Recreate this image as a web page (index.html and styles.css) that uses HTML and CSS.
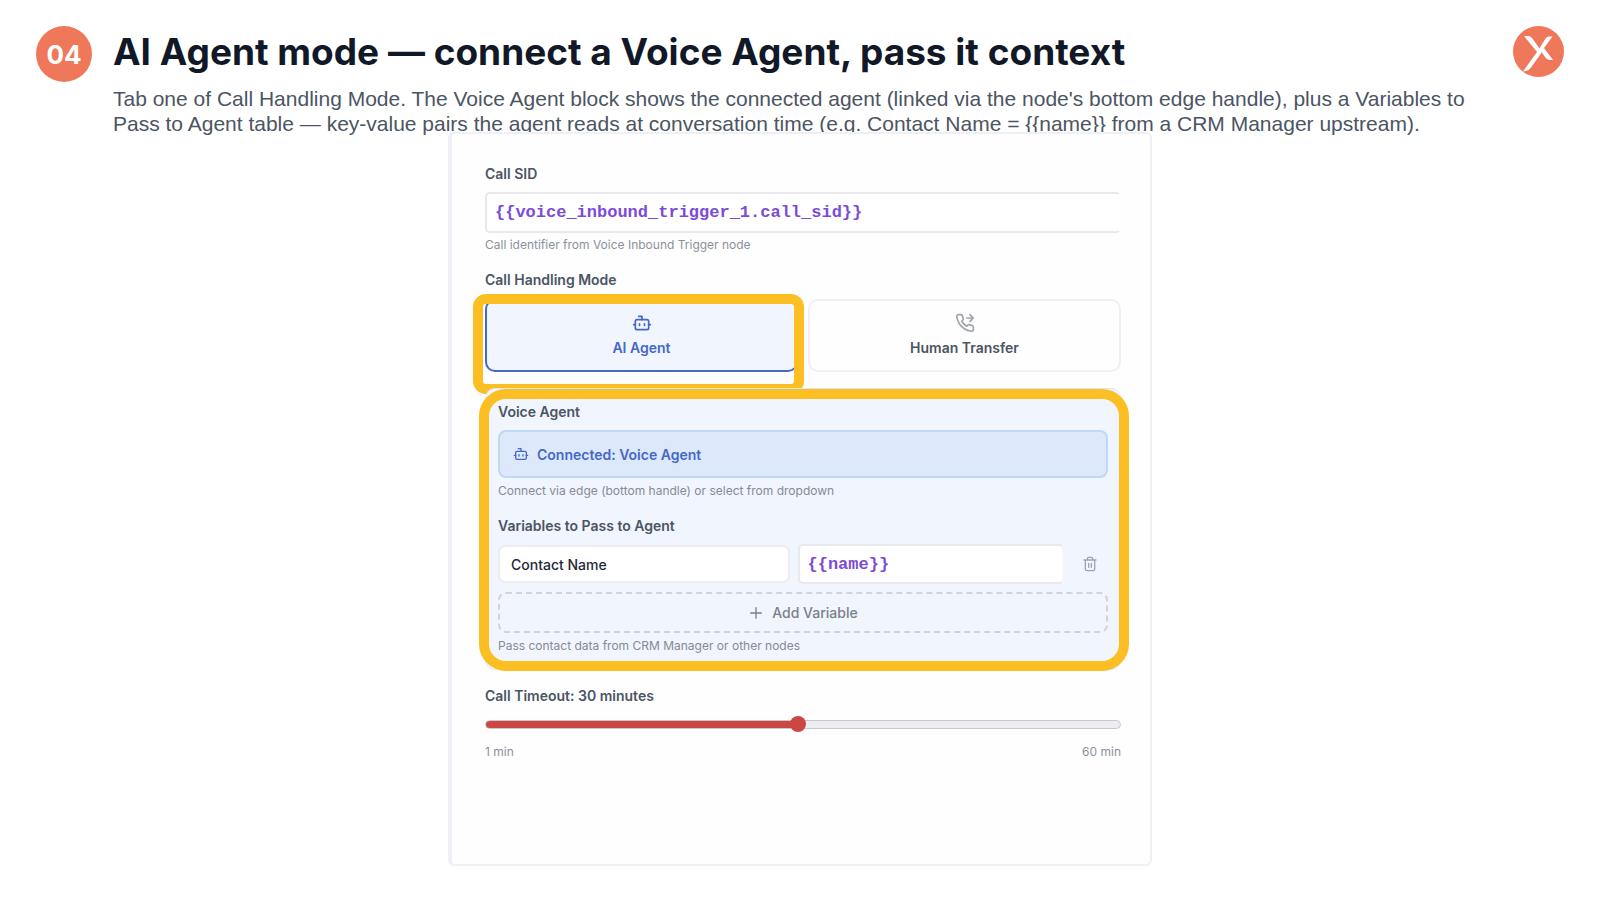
FILE: index.html
```html
<!DOCTYPE html>
<html lang="en">
<head>
<meta charset="utf-8">
<meta name="viewport" content="width=device-width, initial-scale=1">
<title>AI Agent mode</title>
<link rel="stylesheet" href="styles.css">
</head>
<body>
<svg class="sprite" aria-hidden="true">
  <symbol id="bot" viewBox="0 0 24 24">
    <path d="M12 8V4H8"/><rect x="4" y="8" width="16" height="12" rx="2"/><path d="M2 14h2M20 14h2M15 13v2M9 13v2"/>
  </symbol>
</svg>
<header class="header">
  <span class="step">04</span>
  <div class="heading">
    <h1 class="title">AI Agent mode — connect a Voice Agent, pass it context</h1>
    <p class="subtitle">Tab one of Call Handling Mode. The Voice Agent block shows the connected agent (linked via the node's bottom edge handle), plus a Variables to Pass to Agent table — key-value pairs the agent reads at conversation time (e.g. Contact Name = {{name}} from a CRM Manager upstream).</p>
  </div>
  <svg class="logo" viewBox="0 0 51 51" role="img" aria-label="Logo">
    <circle cx="25.500" cy="25.500" r="25.500" fill="#f0785a"/>
    <path d="M11 10h4q2.500 0 4 2l9 12.500q1 1.500 0 3L18 41.500q-2 3-5 3.500l-3 .5L24 26Z" fill="#fff"/>
    <path d="M39.500 10.500H36q-2 0-3.500 2l-5 8q-1.500 2 0 4l4.500 6.500q2 3 4.500 3H40L31 22Z" fill="#fff"/>
  </svg>
</header>
<main class="card">
  <div class="field">
    <label class="label" for="sid">Call SID</label>
    <input class="input code sid" id="sid" type="text" value="{{voice_inbound_trigger_1.call_sid}}">
    <p class="hint">Call identifier from Voice Inbound Trigger node</p>
  </div>
  <div class="field mode-field">
    <h2 class="label">Call Handling Mode</h2>
    <div class="modes">
      <div class="mode-cell">
        <button class="mode mode-active" type="button">
          <svg class="icon icon-lg"><use href="#bot"/></svg>AI Agent
        </button>
        <span class="mark mark-mode"></span>
      </div>
      <div class="mode-cell">
        <button class="mode" type="button">
          <svg class="icon icon-lg icon-muted" viewBox="0 0 24 24"><path d="M14 6h8M18 2l4 4-4 4"/><path d="M22 16.920v3a2 2 0 0 1-2.180 2 19.800 19.800 0 0 1-8.630-3.070 19.500 19.500 0 0 1-6-6 19.800 19.800 0 0 1-3.070-8.670A2 2 0 0 1 4.110 2h3a2 2 0 0 1 2 1.720 12.800 12.800 0 0 0 .7 2.810 2 2 0 0 1-.45 2.110L8.090 9.910a16 16 0 0 0 6 6l1.270-1.270a2 2 0 0 1 2.110-.45 12.800 12.800 0 0 0 2.810.7A2 2 0 0 1 22 16.920z"/></svg>Human Transfer
        </button>
      </div>
    </div>
  </div>
  <section class="panel">
    <h2 class="label">Voice Agent</h2>
    <div class="connected"><svg class="icon"><use href="#bot"/></svg>Connected: Voice Agent</div>
    <p class="hint">Connect via edge (bottom handle) or select from dropdown</p>
    <h2 class="label vars-label">Variables to Pass to Agent</h2>
    <div class="row">
      <input class="input key" type="text" aria-label="Variable name" value="Contact Name">
      <input class="input code value" type="text" aria-label="Variable value" value="{{name}}">
      <button class="trash" type="button" aria-label="Delete variable">
        <svg class="icon icon-muted" viewBox="0 0 24 24"><path d="M3 6h18M19 6v14a2 2 0 0 1-2 2H7a2 2 0 0 1-2-2V6M8 6V4a2 2 0 0 1 2-2h4a2 2 0 0 1 2 2v2M10 11v6M14 11v6"/></svg>
      </button>
    </div>
    <button class="add" type="button"><svg class="icon" viewBox="0 0 24 24"><path d="M4 12h16M12 4v16"/></svg>Add Variable</button>
    <p class="hint">Pass contact data from CRM Manager or other nodes</p>
    <span class="mark mark-panel"></span>
  </section>
  <div class="field">
    <label class="label" for="timeout">Call Timeout: 30 minutes</label>
    <input class="range" id="timeout" type="range" min="1" max="60" value="30">
    <div class="scale"><span>1 min</span><span>60 min</span></div>
  </div>
</main>
</body>
</html>
```
FILE: styles.css
```css
* { box-sizing: border-box; }
body {
  margin: 0;
  background: #fff;
  color: #4b5563;
  font-family: Inter, "Liberation Sans", sans-serif;
}
h1, h2, p { margin: 0; }
button, input { font: inherit; color: inherit; }
button { cursor: pointer; }
.sprite { position: absolute; width: 0; height: 0; }

.header {
  display: flex;
  align-items: flex-start;
  padding: 26px 36px 0;
}
.step {
  display: grid;
  place-items: center;
  flex: none;
  width: 56px;
  height: 56px;
  margin-right: 21px;
  border-radius: 50%;
  background: #f0785a;
  color: #fff;
  font-size: 26px;
  font-weight: 700;
}
.heading { flex: 1; }
.title {
  color: #111827;
  font-size: 37px;
  font-weight: 700;
  line-height: 52px;
}
.subtitle {
  max-width: 1360px;
  padding-top: 8px;
  font-family: "Liberation Sans", Arial, sans-serif;
  font-size: 21px;
  line-height: 25px;
}
.logo { flex: none; width: 51px; height: 51px; }

.card {
  position: relative;
  width: 44%;
  min-width: 480px;
  margin: -4px auto 36px;
  padding: 30px 29px 104px 33px;
  border: 2px solid #f0f0f4;
  border-left: 4px solid #efeff5;
  border-radius: 6px;
  background: #fefefe;
}
.field { display: flex; flex-direction: column; }
.label {
  font-size: 14px;
  font-weight: 600;
  line-height: 20px;
}
.hint {
  color: #8b919c;
  font-size: 12px;
  line-height: 16px;
}
.input {
  min-width: 0;
  border: 2px solid #e8e8ee;
  border-radius: 5px;
  background: #fff;
  outline: 0;
}
.code {
  padding: 0 8px;
  color: #7c4bd8;
  font-family: "Liberation Mono", monospace;
  font-size: 17px;
  font-weight: 700;
}
.sid {
  height: 41px;
  margin: 8px 0 4px;
  border-right-color: transparent;
}
.mode-field { padding: 17px 0 16px; gap: 9px; }
.modes {
  display: grid;
  grid-template-columns: 1fr 1fr;
  gap: 10px;
}
.mode-cell { position: relative; }
.mode {
  display: flex;
  flex-direction: column;
  align-items: center;
  gap: 5px;
  width: 100%;
  padding: 12px;
  border: 2px solid #f0f0f4;
  border-radius: 10px;
  background: #fefefe;
  font-size: 14px;
  font-weight: 600;
  line-height: 20px;
}
.mode-active {
  border-color: #4468c6;
  background: #f0f5fe;
  color: #4468c6;
}
.icon {
  flex: none;
  width: 16px;
  height: 16px;
  fill: none;
  stroke: currentColor;
  stroke-width: 2;
  stroke-linecap: round;
  stroke-linejoin: round;
}
.icon-lg { width: 20px; height: 20px; }
.icon-muted { color: #a0a4ae; }
.mark {
  position: absolute;
  border: 10px solid #fbbf24;
  pointer-events: none;
}
.mark-mode {
  inset: -5px -6px -22px -12px;
  border-radius: 13px;
}
.mark-panel {
  inset: 0 -9px -2px -7px;
  border-radius: 27px;
}

.panel {
  position: relative;
  display: flex;
  flex-direction: column;
  margin-bottom: 16px;
  padding: 13px 12px 15px;
  border: 1px solid #dbe8fb;
  border-radius: 10px;
  background: #f0f5fe;
}
.panel .hint { color: #868b94; }
.connected {
  display: flex;
  align-items: center;
  gap: 8px;
  height: 48px;
  margin: 8px 0 5px;
  padding: 0 13px;
  border: 2px solid #bfd8fa;
  border-radius: 8px;
  background: #dde8fa;
  color: #4468c6;
  font-size: 14px;
  font-weight: 600;
}
.vars-label { margin-top: 17px; }
.row {
  display: grid;
  grid-template-columns: 291fr 266fr 36px;
  align-items: center;
  gap: 8px;
  margin: 8px 0;
}
.key {
  height: 38px;
  padding: 0 11px;
  border-color: #ececf1;
  border-radius: 7px;
  color: #1f2937;
  font-size: 14px;
  font-weight: 500;
}
.value {
  height: 40px;
  border-right-color: #f6f7fb;
}
.trash {
  display: grid;
  place-items: center;
  height: 36px;
  padding: 0;
  border: 0;
  background: none;
}
.add {
  display: flex;
  align-items: center;
  justify-content: center;
  gap: 8px;
  height: 41px;
  margin-bottom: 5px;
  border: 2px dashed #d2d3d7;
  border-radius: 8px;
  background: none;
  color: #7c8087;
  font-size: 14px;
  font-weight: 500;
}

.range {
  appearance: none;
  width: 100%;
  height: 16px;
  margin: 10px 0 12px;
  background: none;
}
.range::-webkit-slider-runnable-track {
  height: 9px;
  border: 1px solid #c6c8ce;
  border-radius: 5px;
  background: linear-gradient(90deg, #cc4643 49%, #ededf0 49%);
}
.range::-webkit-slider-thumb {
  appearance: none;
  width: 16px;
  height: 16px;
  margin-top: -5px;
  border-radius: 50%;
  background: #cc4643;
}
.scale {
  display: flex;
  justify-content: space-between;
  color: #8b919c;
  font-size: 12px;
  line-height: 16px;
}
```
